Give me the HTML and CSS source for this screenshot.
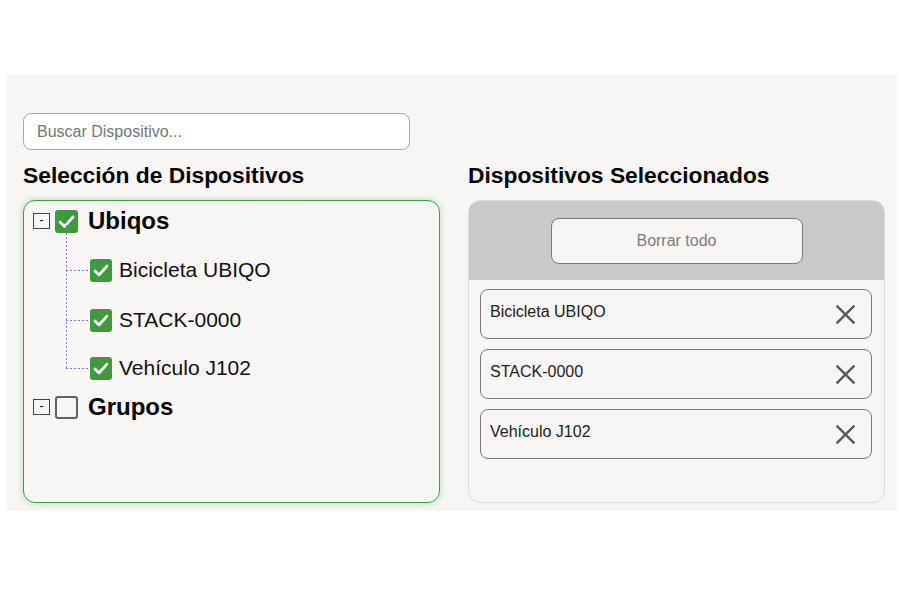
FILE: index.html
```html
<!DOCTYPE html>
<html lang="es">
<head>
<meta charset="utf-8">
<title>Selección de Dispositivos</title>
<link rel="stylesheet" href="styles.css">
</head>
<body>
<div class="panel">
  <div class="search-row">
    <input class="search" type="text" placeholder="Buscar Dispositivo...">
  </div>
  <div class="columns">
    <section class="col">
      <h2 class="heading">Selección de Dispositivos</h2>
      <div class="tree-box">
        <div class="node">
          <div class="row root">
            <span class="toggle">-</span>
            <span class="check on"><svg viewBox="0 0 23 23"><polyline points="5,12 9.5,16.5 18,7"/></svg></span>
            <span class="label bold">Ubiqos</span>
          </div>
          <div class="children">
            <div class="child first">
              <span class="check on small"><svg viewBox="0 0 22 22"><polyline points="5,11.5 9,15.5 17,6.5"/></svg></span>
              <span class="label">Bicicleta UBIQO</span>
            </div>
            <div class="child">
              <span class="check on small"><svg viewBox="0 0 22 22"><polyline points="5,11.5 9,15.5 17,6.5"/></svg></span>
              <span class="label">STACK-0000</span>
            </div>
            <div class="child">
              <span class="check on small"><svg viewBox="0 0 22 22"><polyline points="5,11.5 9,15.5 17,6.5"/></svg></span>
              <span class="label">Vehículo J102</span>
            </div>
          </div>
        </div>
        <div class="node">
          <div class="row root groups">
            <span class="toggle">-</span>
            <span class="check off"></span>
            <span class="label bold">Grupos</span>
          </div>
        </div>
      </div>
    </section>
    <section class="col">
      <h2 class="heading">Dispositivos Seleccionados</h2>
      <div class="selected-box">
        <div class="selected-head">
          <button class="clear-btn" type="button">Borrar todo</button>
        </div>
        <ul class="items">
          <li class="item"><span>Bicicleta UBIQO</span><span class="x"><svg viewBox="0 0 20 20"><path d="M1.5 1.5 L18.5 18.5 M18.5 1.5 L1.5 18.5"/></svg></span></li>
          <li class="item"><span>STACK-0000</span><span class="x"><svg viewBox="0 0 20 20"><path d="M1.5 1.5 L18.5 18.5 M18.5 1.5 L1.5 18.5"/></svg></span></li>
          <li class="item"><span>Vehículo J102</span><span class="x"><svg viewBox="0 0 20 20"><path d="M1.5 1.5 L18.5 18.5 M18.5 1.5 L1.5 18.5"/></svg></span></li>
        </ul>
      </div>
    </section>
  </div>
</div>
</body>
</html>
```

FILE: styles.css
```css
* { box-sizing: border-box; }

html, body {
  margin: 0;
  padding: 0;
  background: #ffffff;
  font-family: "Liberation Sans", Arial, sans-serif;
}

body {
  padding: 74px 3px 0 6px;
}

.panel {
  width: 891px;
  height: 437px;
  background: #f7f6f4;
  padding: 39px 12px 0 17px;
}

.search-row {
  display: flex;
}

.search {
  width: 387px;
  height: 37px;
  border: 1px solid #a9a9a9;
  border-radius: 8px;
  background: #ffffff;
  padding: 0 13px;
  font-family: "Liberation Sans", Arial, sans-serif;
  font-size: 16px;
  color: #333;
  outline: none;
}

.search::placeholder {
  color: #757575;
}

.columns {
  display: flex;
  gap: 28px;
  margin-top: 10px;
}

.col {
  width: 417px;
  display: flex;
  flex-direction: column;
}

.heading {
  margin: 0;
  height: 40px;
  line-height: 30px;
  font-size: 22.8px;
  font-weight: bold;
  color: #000;
  padding-top: 0;
}

/* tree */
.tree-box {
  height: 303px;
  border: 1px solid #3f9d43;
  border-radius: 12px;
  box-shadow: 0 0 6px rgba(67, 160, 71, 0.35);
  padding: 8px 0 0 9px;
}

.row {
  display: flex;
  align-items: center;
  height: 24px;
}

.toggle {
  width: 17px;
  height: 16px;
  border: 1px solid #444;
  font-size: 12px;
  line-height: 12px;
  text-align: center;
  color: #000;
  margin-right: 5px;
  flex: none;
}

.check {
  width: 23px;
  height: 23px;
  border-radius: 3px;
  flex: none;
  display: flex;
}

.check.small {
  width: 22px;
  height: 23px;
}

.check.on {
  background: #3d9a3d;
}

.check svg {
  width: 100%;
  height: 100%;
}

.check polyline {
  fill: none;
  stroke: #ffffff;
  stroke-width: 2.8;
  stroke-linecap: round;
  stroke-linejoin: round;
}

.check.off {
  border: 2px solid #606060;
  background: #f7f6f4;
}

.label {
  font-size: 21px;
  color: #111;
  margin-left: 7px;
}

.label.bold {
  font-size: 24px;
  font-weight: bold;
  color: #000;
  margin-left: 10px;
}

.children {
  margin-left: 33px;
  padding-top: 1px;
}

.child {
  position: relative;
  display: flex;
  align-items: center;
  height: 24px;
  margin-top: 25px;
  padding-left: 24px;
}

.child.first {
  margin-top: 24px;
}

.child + .child {
  margin-top: 26px;
}

.child:last-child {
  margin-top: 24px;
}

/* vertical connector segment */
.child::before {
  content: "";
  position: absolute;
  left: 0;
  top: -38px;
  height: 51px;
  width: 1px;
  background-image: repeating-linear-gradient(to bottom, #6f88de 0 2px, transparent 2px 4px);
}

.child.first::before {
  top: -37px;
  height: 50px;
}

/* horizontal connector */
.child::after {
  content: "";
  position: absolute;
  left: 0;
  top: 12px;
  width: 24px;
  height: 1px;
  background-image: repeating-linear-gradient(to right, #6f88de 0 2px, transparent 2px 4px);
}

.groups {
  margin-top: 15px;
}

/* selected */
.selected-box {
  height: 303px;
  border: 1px solid #dcdcdc;
  border-radius: 12px;
  overflow: hidden;
  background: #f7f6f4;
}

.selected-head {
  height: 79px;
  background: #c9c9c9;
  display: flex;
  justify-content: center;
  padding-top: 17px;
}

.clear-btn {
  width: 252px;
  height: 46px;
  border: 1px solid #7a7a7a;
  border-radius: 8px;
  background: #f7f6f4;
  font-family: "Liberation Sans", Arial, sans-serif;
  font-size: 16px;
  color: #7d7d7d;
  cursor: pointer;
}

.items {
  list-style: none;
  margin: 0;
  padding: 9px 12px 0 11px;
  display: flex;
  flex-direction: column;
  gap: 10px;
}

.item {
  height: 50px;
  border: 1px solid #7a7a7a;
  border-radius: 8px;
  display: flex;
  align-items: center;
  justify-content: space-between;
  padding: 0 15px 4px 9px;
  font-size: 16px;
  color: #222;
}

.x {
  width: 21px;
  height: 21px;
  display: flex;
  margin-top: 4px;
}

.x svg {
  width: 100%;
  height: 100%;
}

.x path {
  stroke: #585858;
  stroke-width: 2.2;
  fill: none;
}
```
